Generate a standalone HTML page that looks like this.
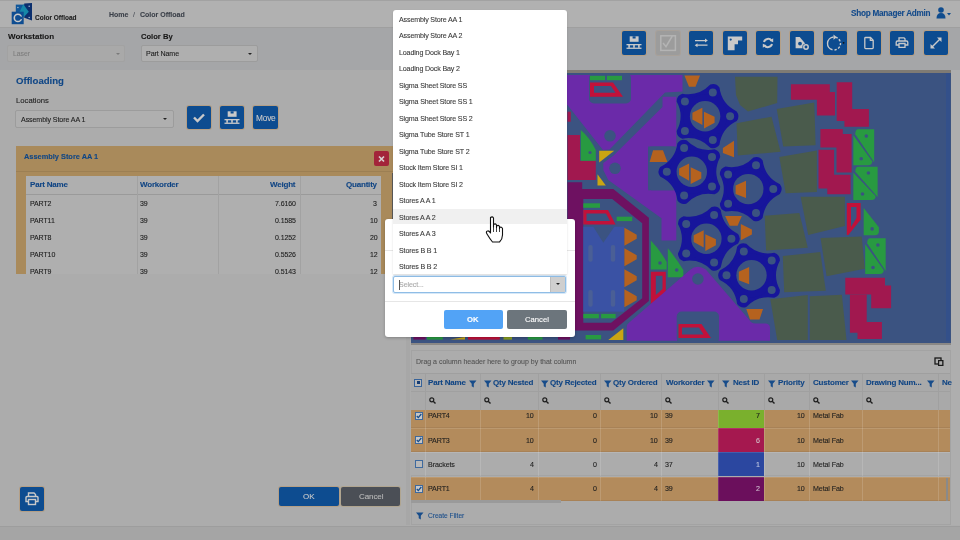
<!DOCTYPE html>
<html><head><meta charset="utf-8">
<style>
*{box-sizing:border-box;margin:0;padding:0}
html,body{width:960px;height:540px;overflow:hidden}
body{position:relative;background:#acacac;font-family:"Liberation Sans",sans-serif;color:#1c1c1c}
.t{-webkit-text-stroke:0.1px currentColor}
.a{position:absolute}
.t{position:absolute;white-space:nowrap;line-height:1;will-change:transform}
.btn{position:absolute;background:#0d4c90;border-radius:2px;box-shadow:0 0 0 1px #b49f86}
.sel{position:absolute;background:#afafaf;border:1px solid #9c9c9c;border-radius:2px}
.caret{position:absolute;width:0;height:0;border-left:2px solid transparent;border-right:2px solid transparent;border-top:2.5px solid #222}
.hdr{color:#114584;font-weight:bold}
</style></head>
<body>
<!-- header -->
<div class="a" style="left:0;top:0;width:960px;height:27px;background:#b1b1b1;border-top:1px solid #a2a2a2"></div>
<div class="a" style="left:0;top:27px;width:960px;height:43px;background:#a5a6a8;border-top:1px solid #9f9f9f"></div>
<div class="a" style="left:0;top:525.5px;width:960px;height:15px;background:#a5a5a5;border-top:1px solid #9d9d9d"></div>

<!-- logo -->
<svg class="a" style="left:0;top:0" width="34" height="27" viewBox="0 0 34 27">
  <rect x="15.8" y="4.6" width="9" height="7.5" fill="#10579a"/>
  <polygon points="24.2,3.4 32,3 32,20.5 24.2,17.8" fill="#0b2f6e"/>
  <polygon points="23.3,4.2 28.8,11.7 23.6,17.3 19.5,12" fill="#1688a8"/>
  <rect x="11.7" y="11.7" width="12" height="12.5" fill="#0f4d91"/>
  <circle cx="17.9" cy="17.9" r="3.6" fill="none" stroke="#c8c8c8" stroke-width="1.6"/>
  <rect x="19.6" y="16.6" width="3" height="2.6" fill="#0f4d91"/>
  <circle cx="17.9" cy="7.5" r="0.8" fill="#9db4cc"/><circle cx="29.2" cy="6.2" r="0.8" fill="#9db4cc"/><circle cx="29.2" cy="17.5" r="0.8" fill="#9db4cc"/>
</svg>
<div class="t" style="left:35px;top:15px;font-size:6.5px;font-weight:bold;color:#1e1e1e">Color Offload</div>
<div class="t" style="left:109px;top:11px;font-size:7px;font-weight:bold;color:#3a3f48">Home</div>
<div class="t" style="left:133px;top:11px;font-size:7px;color:#4a4f58">/</div>
<div class="t" style="left:140px;top:11px;font-size:7px;font-weight:bold;color:#3a3f48">Color Offload</div>
<div class="t" style="left:851px;top:9.8px;font-size:8.2px;letter-spacing:-0.25px;font-weight:bold;color:#134a8a">Shop Manager Admin</div>
<svg class="a" style="left:936px;top:7px" width="17" height="12" viewBox="0 0 17 12">
  <circle cx="5" cy="3" r="2.8" fill="#0f4c8e"/>
  <path d="M0.5 11.5 Q0.5 6 5 6 Q9.5 6 9.5 11.5 Z" fill="#0f4c8e"/>
  <polygon points="11,6 15,6 13,8.5" fill="#0f4c8e"/>
</svg>

<!-- toolbar left -->
<div class="t" style="left:8px;top:33px;font-size:8px;font-weight:bold;color:#161616">Workstation</div>
<div class="sel" style="left:7px;top:45px;width:118px;height:17px;background:#a9a9a9;border-color:#a2a2a2"></div>
<div class="t" style="left:13px;top:51px;font-size:6.8px;color:#7e7e7e">Laser</div>
<div class="caret" style="left:116px;top:53px;border-top-color:#7a7a7a"></div>
<div class="t" style="left:141px;top:33px;font-size:7.6px;font-weight:bold;color:#161616">Color By</div>
<div class="sel" style="left:141px;top:45px;width:117px;height:17px"></div>
<div class="t" style="left:146px;top:51.0px;font-size:7.1px;letter-spacing:-0.1px;color:#1e1e1e">Part Name</div>
<div class="caret" style="left:248px;top:53px"></div>

<!-- offloading -->
<div class="t" style="left:16px;top:76px;font-size:9.6px;font-weight:bold;color:#0f4686">Offloading</div>
<div class="t" style="left:16px;top:97px;font-size:7.7px;color:#1e1e1e">Locations</div>
<div class="sel" style="left:15px;top:110px;width:159px;height:18px"></div>
<div class="t" style="left:21px;top:117.0px;font-size:7.1px;letter-spacing:-0.1px;color:#1e1e1e">Assembly Store AA 1</div>
<div class="caret" style="left:163px;top:118px"></div>
<div class="btn" style="left:187px;top:106px;width:24px;height:23px"></div>
<div class="btn" style="left:220px;top:106px;width:24px;height:23px"></div>
<div class="btn" style="left:253px;top:106px;width:25px;height:23px"></div>
<div class="t" style="left:255.5px;top:113.5px;font-size:8.3px;letter-spacing:-0.2px;color:#c9c9c9">Move</div>

<!-- orange panel -->
<div class="a" style="left:16px;top:146px;width:377px;height:128px;background:#a98a5b"></div>
<div class="a" style="left:16px;top:171px;width:377px;height:1px;background:#9c7f53"></div>
<div class="t" style="left:24px;top:153px;font-size:7.4px;font-weight:bold;color:#0f4686">Assembly Store AA 1</div>
<div class="a" style="left:374px;top:151px;width:15px;height:15px;background:#a3243a;border-radius:2px"></div>
<svg class="a" style="left:374px;top:151px" width="15" height="15" viewBox="0 0 15 15"><path d="M5 5.5 L10 10.5 M10 5.5 L5 10.5" stroke="#d9d0d0" stroke-width="1.7"/></svg>

<div class="a" style="left:26px;top:176px;width:355px;height:98px;background:#afafaf;overflow:hidden">
<div class="a" style="left:0;top:17.5px;width:355px;height:1px;background:#9a9a9a"></div>
<div class="a" style="left:110.7px;top:0;width:1px;height:98px;background:#a2a2a2"></div>
<div class="a" style="left:191.6px;top:0;width:1px;height:98px;background:#a2a2a2"></div>
<div class="a" style="left:274px;top:0;width:1px;height:98px;background:#a2a2a2"></div>
<div class="t hdr" style="left:3.7px;top:4.8px;font-size:8px;letter-spacing:-0.2px">Part Name</div>
<div class="t hdr" style="left:114px;top:4.8px;font-size:8px;letter-spacing:-0.2px">Workorder</div>
<div class="t hdr" style="right:85.5px;top:4.8px;font-size:8px;letter-spacing:-0.2px">Weight</div>
<div class="t hdr" style="right:3.8px;top:4.8px;font-size:8px;letter-spacing:-0.2px">Quantity</div>
<div class="t" style="left:3.7px;top:24.3px;font-size:7px;letter-spacing:-0.1px">PART2</div>
<div class="t" style="left:114px;top:24.3px;font-size:7px;letter-spacing:-0.1px">39</div>
<div class="t" style="right:85.5px;top:24.3px;font-size:7px;letter-spacing:-0.1px">7.6160</div>
<div class="t" style="right:3.8px;top:24.3px;font-size:7px;letter-spacing:-0.1px">3</div>
<div class="t" style="left:3.7px;top:41.3px;font-size:7px;letter-spacing:-0.1px">PART11</div>
<div class="t" style="left:114px;top:41.3px;font-size:7px;letter-spacing:-0.1px">39</div>
<div class="t" style="right:85.5px;top:41.3px;font-size:7px;letter-spacing:-0.1px">0.1585</div>
<div class="t" style="right:3.8px;top:41.3px;font-size:7px;letter-spacing:-0.1px">10</div>
<div class="t" style="left:3.7px;top:58.3px;font-size:7px;letter-spacing:-0.1px">PART8</div>
<div class="t" style="left:114px;top:58.3px;font-size:7px;letter-spacing:-0.1px">39</div>
<div class="t" style="right:85.5px;top:58.3px;font-size:7px;letter-spacing:-0.1px">0.1252</div>
<div class="t" style="right:3.8px;top:58.3px;font-size:7px;letter-spacing:-0.1px">20</div>
<div class="t" style="left:3.7px;top:75.3px;font-size:7px;letter-spacing:-0.1px">PART10</div>
<div class="t" style="left:114px;top:75.3px;font-size:7px;letter-spacing:-0.1px">39</div>
<div class="t" style="right:85.5px;top:75.3px;font-size:7px;letter-spacing:-0.1px">0.5526</div>
<div class="t" style="right:3.8px;top:75.3px;font-size:7px;letter-spacing:-0.1px">12</div>
<div class="t" style="left:3.7px;top:92.3px;font-size:7px;letter-spacing:-0.1px">PART9</div>
<div class="t" style="left:114px;top:92.3px;font-size:7px;letter-spacing:-0.1px">39</div>
<div class="t" style="right:85.5px;top:92.3px;font-size:7px;letter-spacing:-0.1px">0.5143</div>
<div class="t" style="right:3.8px;top:92.3px;font-size:7px;letter-spacing:-0.1px">12</div>
</div>
<div class="a" style="left:392px;top:173px;width:1px;height:101px;background:#5a5a5a"></div>
<div class="btn" style="left:20px;top:487px;width:24px;height:24px"></div>
<div class="btn" style="left:279px;top:487px;width:60px;height:19px"></div>
<div class="t" style="left:303px;top:492.5px;font-size:8px;color:#c9c9c9">OK</div>
<div class="a" style="left:341px;top:487px;width:59px;height:19px;background:#4b4f56;border-radius:2px;box-shadow:0 0 0 1px #b0a590"></div>
<div class="t" style="left:358.5px;top:492.5px;font-size:8px;letter-spacing:-0.1px;color:#b9b9b9">Cancel</div>
<div class="btn" style="left:622px;top:31px;width:24px;height:24px"></div>
<svg class="a" style="left:622px;top:31px" width="24" height="24" viewBox="0 0 24 24"><rect x="7.7" y="5.3" width="8.9" height="5.5" fill="#c9c9c9"/><rect x="10.6" y="5.3" width="3" height="2.2" fill="#0d4c90"/>
<rect x="4.5" y="13" width="15" height="1.3" fill="#c9c9c9"/><rect x="4.5" y="16.6" width="15" height="1.3" fill="#c9c9c9"/>
<rect x="6.3" y="14" width="1.6" height="2.8" fill="#c9c9c9"/><rect x="11.2" y="14" width="1.6" height="2.8" fill="#c9c9c9"/><rect x="16.1" y="14" width="1.6" height="2.8" fill="#c9c9c9"/></svg>
<div class="a" style="left:656px;top:31px;width:24px;height:24px;background:#9c9c9c;border-radius:2px;box-shadow:0 0 0 1px #a8a19a"></div>
<svg class="a" style="left:656px;top:31px" width="24" height="24" viewBox="0 0 24 24"><rect x="4.8" y="4.8" width="14.6" height="14.6" stroke="#b4b4b4" stroke-width="1.5" fill="none"/><path d="M7 12 L10 15.6 L16.3 5" stroke="#b4b4b4" stroke-width="1.5" fill="none"/></svg>
<div class="btn" style="left:689px;top:31px;width:24px;height:24px"></div>
<svg class="a" style="left:689px;top:31px" width="24" height="24" viewBox="0 0 24 24"><path d="M6 9.6 H16.5 M8 14.2 H18.5" stroke="#c9c9c9" stroke-width="1.3" fill="none"/><polygon points="16,7.6 18.8,9.6 16,11.6" fill="#c9c9c9"/><polygon points="8.5,12.2 5.7,14.2 8.5,16.2" fill="#c9c9c9"/></svg>
<div class="btn" style="left:723px;top:31px;width:24px;height:24px"></div>
<svg class="a" style="left:723px;top:31px" width="24" height="24" viewBox="0 0 24 24"><path d="M4.8 5.6 H19.2 V9.6 H15 V13.2 H11.6 V19.2 H4.8 Z" fill="#c9c9c9"/><circle cx="7.7" cy="8.6" r="1.1" fill="#0d4c90"/></svg>
<div class="btn" style="left:756px;top:31px;width:24px;height:24px"></div>
<svg class="a" style="left:756px;top:31px" width="24" height="24" viewBox="0 0 24 24"><path d="M8 11 A4.3 4.3 0 0 1 15.6 9.6" stroke="#c9c9c9" stroke-width="2" fill="none"/><polygon points="13.6,9.8 17.2,7.2 17.2,11.3" fill="#c9c9c9"/><path d="M16 13 A4.3 4.3 0 0 1 8.4 14.4" stroke="#c9c9c9" stroke-width="2" fill="none"/><polygon points="10.4,14.2 6.8,16.8 6.8,12.7" fill="#c9c9c9"/></svg>
<div class="btn" style="left:790px;top:31px;width:24px;height:24px"></div>
<svg class="a" style="left:790px;top:31px" width="24" height="24" viewBox="0 0 24 24"><path d="M5.6 6 H9.7 L15.2 12.5 L13.5 17.3 H5.6 Z" fill="#c9c9c9"/><circle cx="10" cy="12.6" r="1.9" fill="#0d4c90"/><circle cx="16" cy="16" r="3.6" fill="#0d4c90"/><circle cx="16" cy="16" r="2.2" stroke="#c9c9c9" stroke-width="1.5" fill="none"/></svg>
<div class="btn" style="left:823px;top:31px;width:24px;height:24px"></div>
<svg class="a" style="left:823px;top:31px" width="24" height="24" viewBox="0 0 24 24"><path d="M10.5 6 A6.5 6.5 0 0 0 9.5 18.8" stroke="#c9c9c9" stroke-width="1.4" fill="none"/><path d="M11.5 19 A6.5 6.5 0 0 0 12.5 6.2" stroke="#c9c9c9" stroke-width="1.4" fill="none" stroke-dasharray="2.3 1.6"/><polygon points="10.5,3.6 13.8,6.3 10.5,8.8" fill="#c9c9c9"/><circle cx="20.6" cy="11.8" r="0.9" fill="#111"/></svg>
<div class="btn" style="left:857px;top:31px;width:24px;height:24px"></div>
<svg class="a" style="left:857px;top:31px" width="24" height="24" viewBox="0 0 24 24"><path d="M8.6 6.5 H13.5 L16.2 9.2 V16.8 Q16.2 17.6 15.4 17.6 H8.6 Q7.8 17.6 7.8 16.8 V7.3 Q7.8 6.5 8.6 6.5 Z" stroke="#c9c9c9" stroke-width="1.3" fill="none"/><path d="M13.3 6.8 V9.4 H16" stroke="#c9c9c9" stroke-width="1.2" fill="none"/></svg>
<div class="btn" style="left:890px;top:31px;width:24px;height:24px"></div>
<svg class="a" style="left:890px;top:31px" width="24" height="24" viewBox="0 0 24 24"><path d="M9 10 V6.8 H14 L15 7.8 V10" stroke="#c9c9c9" stroke-width="1.3" fill="none"/><path d="M7.5 10 H16.5 Q17.8 10 17.8 11.3 V14 H6.2 V11.3 Q6.2 10 7.5 10 Z" stroke="#c9c9c9" stroke-width="1.3" fill="none"/><path d="M9 12.5 H15 V16.3 H9 Z" stroke="#c9c9c9" stroke-width="1.3" fill="#0d4c90"/></svg>
<div class="btn" style="left:924px;top:31px;width:24px;height:24px"></div>
<svg class="a" style="left:924px;top:31px" width="24" height="24" viewBox="0 0 24 24"><path d="M7.5 16.5 L16.5 7.5" stroke="#c9c9c9" stroke-width="1.4"/><polygon points="13,6.5 17.5,6.5 17.5,11" fill="#c9c9c9"/><polygon points="6.5,13 6.5,17.5 11,17.5" fill="#c9c9c9"/></svg>
<svg class="a" style="left:187px;top:106px" width="24" height="23" viewBox="0 0 24 23"><path d="M7 11.5 L10.5 15 L17 8.5" stroke="#c9c9c9" stroke-width="2.4" fill="none"/></svg>
<svg class="a" style="left:220px;top:106px" width="24" height="23" viewBox="0 0 24 23"><rect x="7.7" y="5.3" width="8.9" height="5.5" fill="#c9c9c9"/><rect x="10.6" y="5.3" width="3" height="2.2" fill="#0d4c90"/>
<rect x="4.5" y="13" width="15" height="1.3" fill="#c9c9c9"/><rect x="4.5" y="16.6" width="15" height="1.3" fill="#c9c9c9"/>
<rect x="6.3" y="14" width="1.6" height="2.8" fill="#c9c9c9"/><rect x="11.2" y="14" width="1.6" height="2.8" fill="#c9c9c9"/><rect x="16.1" y="14" width="1.6" height="2.8" fill="#c9c9c9"/></svg>
<svg class="a" style="left:20px;top:487px" width="24" height="24" viewBox="0 0 24 24"><path d="M8.5 10 V6 H14 L15.5 7.5 V10" stroke="#c9c9c9" stroke-width="1.4" fill="none"/><path d="M6 10.5 Q6 9.5 7 9.5 H17 Q18 9.5 18 10.5 V14.5 H6 Z" fill="none" stroke="#c9c9c9" stroke-width="1.4"/><rect x="8.5" y="12.5" width="7" height="5" stroke="#c9c9c9" stroke-width="1.4" fill="#0d4c90"/></svg>
<div class="a" style="left:411px;top:70px;width:540px;height:3px;background:#7f7b74"></div>
<svg id="nest" class="a" style="left:411px;top:73px" width="540" height="271" viewBox="411 73 540 271"><rect x="411" y="73" width="540" height="271" fill="#3b5381"/><rect x="946" y="73" width="4" height="268" fill="#33508a"/><!--NEST--><polygon points="411.0,75.0 682.5,75.0 682.5,91.5 665.0,92.5 609.5,149.5 603.0,150.0 599.0,145.0 567.5,105.0 411.0,105.0" fill="#6b2aa9" />
<rect x="589.0" y="73.0" width="42.0" height="30.5" rx="5" fill="#3b5381"/>
<rect x="590.0" y="75.8" width="15.0" height="4.4" rx="0" fill="#289a41"/>
<rect x="607.0" y="75.8" width="15.0" height="4.4" rx="0" fill="#289a41"/>
<path d="M590 82.5 H613 L623 96.7 H590 Z M594 86 V92.8 H615.5 L611 86 Z" fill="#c1113a" fill-rule="evenodd"/>
<circle cx="610.0" cy="135.8" r="5.8" fill="#3b5381"/>
<polygon points="662.5,107.0 662.5,96.7 676.3,96.7 676.3,146.5 648.1,146.5 648.1,190.2 676.3,190.2 676.3,240.6 661.5,240.6 661.5,218.3 608.3,180.0 603.3,170.0 603.3,163.0 613.3,155.8" fill="#6b2aa9" />
<rect x="648.1" y="146.5" width="28.2" height="43.7" rx="4" fill="#3b5381"/>
<circle cx="615.0" cy="168.3" r="5.8" fill="#3b5381"/>
<polygon points="653.1,150.2 663.0,150.2 667.4,162.0 649.6,162.0" fill="#b5621f" />
<rect x="567.5" y="111.7" width="3.3" height="10.0" rx="0" fill="#a1184f"/>
<polygon points="567.5,135.0 580.0,135.0 580.0,160.8 595.8,160.8 595.8,180.0 567.5,180.0" fill="#a1184f" />
<path d="M580.8 130 V160.8 H595.8 V150 Q590 138 580.8 130 Z" fill="#289a41" />
<circle cx="590.0" cy="152.5" r="1.6" fill="#3b5381"/>
<polygon points="599.2,150.8 614.2,150.8 599.2,162.5" fill="#c9a512" />
<polygon points="597.5,174.2 597.5,185.5 605.8,185.5" fill="#c9a512" />
<path d="M567.5 182.2 H582.2 V188.9 H613.3 L648.9 217.8 V301 L613.3 330.5 H567.5 Z M583.3 198.9 V322.8 H611.1 L642.2 298.3 V223.3 L612.2 198.9 Z" fill="#6e1161" fill-rule="evenodd"/>
<rect x="583.3" y="203.3" width="16.7" height="4.5" rx="0" fill="#289a41"/>
<rect x="616.7" y="216.7" width="15.5" height="4.4" rx="0" fill="#289a41"/>
<path d="M583.3 210 H608 L615.6 224.4 H583.3 Z M586.5 213.5 V221 H610 L606 213.5 Z" fill="#c1113a" fill-rule="evenodd"/>
<rect x="583.3" y="226.7" width="41.0" height="85.0" rx="0" fill="#3a52a4"/>
<polygon points="593.3,226.7 614.4,226.7 603.3,242.8" fill="#3b5381" />
<rect x="588.3" y="245.0" width="4.4" height="16.7" rx="2" fill="#4a5f96"/>
<rect x="588.3" y="290.0" width="4.4" height="16.7" rx="2" fill="#4a5f96"/>
<rect x="610.8" y="245.0" width="4.4" height="16.7" rx="2" fill="#4a5f96"/>
<rect x="610.8" y="290.0" width="4.4" height="16.7" rx="2" fill="#4a5f96"/>
<polygon points="624.4,227.7 636.7,234.7 636.7,238.7 624.4,245.7" fill="#b5621f" />
<polygon points="624.4,248.2 636.7,255.2 636.7,259.2 624.4,266.2" fill="#b5621f" />
<polygon points="624.4,269.3 636.7,276.3 636.7,280.3 624.4,287.3" fill="#b5621f" />
<polygon points="624.4,289.3 636.7,296.3 636.7,300.3 624.4,307.3" fill="#b5621f" />
<rect x="583.3" y="313.9" width="15.6" height="4.4" rx="0" fill="#289a41"/>
<rect x="601.1" y="313.9" width="14.5" height="4.4" rx="0" fill="#289a41"/>
<rect x="585.6" y="335.0" width="15.5" height="4.4" rx="0" fill="#289a41"/>
<polygon points="608.3,340.0 623.3,328.3 623.3,340.0" fill="#c9a512" />
<path d="M650.8 240.6 V269.4 H666.7 V262 Q660 250 650.8 240.6 Z" fill="#289a41" />
<circle cx="660.0" cy="263.0" r="1.8" fill="#3b5381"/>
<path d="M667.8 248.3 V277.2 H683.3 V270 Q676 258 667.8 248.3 Z" fill="#289a41" />
<circle cx="676.7" cy="270.0" r="1.8" fill="#3b5381"/>
<path d="M650.8 271.7 H665.8 V292.5 L650.8 304.2 Z M655.8 275.8 V295 L662.5 289 V275.8 Z" fill="#c1113a" fill-rule="evenodd"/>
<path d="M626.7 340.8 V327 Q626.7 324 629.2 322.5 L690 270 Q697 264 705.8 269.4 L749.8 320.4 Q751 323 755 323.5 H766 Q770 324 770 328 V340.8 Z" fill="#6b2aa9" />
<circle cx="697.9" cy="279.0" r="5.8" fill="#3b5381"/>
<rect x="676.7" y="311.6" width="42.3" height="32.0" rx="5" fill="#3b5381"/>
<path d="M678.5 324 H701.5 L711 338 H678.5 Z M682 327.5 V334.5 H703.5 L699 327.5 Z" fill="#c1113a" fill-rule="evenodd"/>
<polygon points="684.4,75.6 700.0,75.6 695.5,86.7 689.0,86.7" fill="#b5621f" />
<polygon points="722.9,148.0 734.0,140.7 734.0,157.3 722.9,153.0" fill="#b5621f" />
<polygon points="725.1,216.1 741.8,216.1 737.6,225.8 729.7,225.8" fill="#b5621f" />
<polygon points="740.8,224.0 740.8,240.2 751.9,234.6 751.9,229.5" fill="#b5621f" />
<polygon points="746.3,309.0 763.0,309.0 759.5,319.5 750.0,319.5" fill="#b5621f" />
<path d="M736.73 121.02 Q721.68 128.25 719.46 144.80 A8.2 8.2 0 0 1 710.29 147.78 Q698.77 135.70 682.34 138.69 A8.2 8.2 0 0 1 676.67 130.89 Q684.60 116.20 676.67 101.51 A8.2 8.2 0 0 1 682.34 93.71 Q698.77 96.70 710.29 84.62 A8.2 8.2 0 0 1 719.46 87.60 Q721.68 104.15 736.73 111.38 A8.2 8.2 0 0 1 736.73 121.02 Z" fill="#17159b" />
<circle cx="705.1" cy="116.2" r="22.0" fill="#17159b"/>
<circle cx="705.1" cy="116.2" r="15.2" fill="#3b5381"/>
<circle cx="730.1" cy="116.2" r="4.0" fill="#3b5381"/>
<circle cx="712.8" cy="140.0" r="4.0" fill="#3b5381"/>
<circle cx="684.9" cy="130.9" r="4.0" fill="#3b5381"/>
<circle cx="684.9" cy="101.5" r="4.0" fill="#3b5381"/>
<circle cx="712.8" cy="92.4" r="4.0" fill="#3b5381"/>
<polygon points="702.4,107.8 702.4,125.1 692.4,119.5 692.4,112.8" fill="#b5621f" />
<polygon points="704.0,111.7 704.0,128.4 714.6,122.8 714.6,116.7" fill="#b5621f" />
<path d="M660.17 166.98 Q675.22 159.75 677.44 143.20 A8.2 8.2 0 0 1 686.61 140.22 Q698.13 152.30 714.56 149.31 A8.2 8.2 0 0 1 720.23 157.11 Q712.30 171.80 720.23 186.49 A8.2 8.2 0 0 1 714.56 194.29 Q698.13 191.30 686.61 203.38 A8.2 8.2 0 0 1 677.44 200.40 Q675.22 183.85 660.17 176.62 A8.2 8.2 0 0 1 660.17 166.98 Z" fill="#17159b" />
<circle cx="691.8" cy="171.8" r="22.0" fill="#17159b"/>
<circle cx="691.8" cy="171.8" r="15.2" fill="#3b5381"/>
<circle cx="666.8" cy="171.8" r="4.0" fill="#3b5381"/>
<circle cx="684.1" cy="148.0" r="4.0" fill="#3b5381"/>
<circle cx="712.0" cy="157.1" r="4.0" fill="#3b5381"/>
<circle cx="712.0" cy="186.5" r="4.0" fill="#3b5381"/>
<circle cx="684.1" cy="195.6" r="4.0" fill="#3b5381"/>
<polygon points="689.1,163.4 689.1,180.7 679.1,175.1 679.1,168.4" fill="#b5621f" />
<polygon points="690.7,167.3 690.7,184.0 701.3,178.4 701.3,172.3" fill="#b5621f" />
<path d="M779.93 193.92 Q764.88 201.15 762.66 217.70 A8.2 8.2 0 0 1 753.49 220.68 Q741.97 208.60 725.54 211.59 A8.2 8.2 0 0 1 719.87 203.79 Q727.80 189.10 719.87 174.41 A8.2 8.2 0 0 1 725.54 166.61 Q741.97 169.60 753.49 157.52 A8.2 8.2 0 0 1 762.66 160.50 Q764.88 177.05 779.93 184.28 A8.2 8.2 0 0 1 779.93 193.92 Z" fill="#17159b" />
<circle cx="748.3" cy="189.1" r="22.0" fill="#17159b"/>
<circle cx="748.3" cy="189.1" r="15.2" fill="#3b5381"/>
<circle cx="773.3" cy="189.1" r="4.0" fill="#3b5381"/>
<circle cx="756.0" cy="212.9" r="4.0" fill="#3b5381"/>
<circle cx="728.1" cy="203.8" r="4.0" fill="#3b5381"/>
<circle cx="728.1" cy="174.4" r="4.0" fill="#3b5381"/>
<circle cx="756.0" cy="165.3" r="4.0" fill="#3b5381"/>
<polygon points="746.0,180.8 746.0,198.0 735.6,194.0 735.6,185.5" fill="#b5621f" />
<path d="M738.03 243.52 Q722.98 250.75 720.76 267.30 A8.2 8.2 0 0 1 711.59 270.28 Q700.07 258.20 683.64 261.19 A8.2 8.2 0 0 1 677.97 253.39 Q685.90 238.70 677.97 224.01 A8.2 8.2 0 0 1 683.64 216.21 Q700.07 219.20 711.59 207.12 A8.2 8.2 0 0 1 720.76 210.10 Q722.98 226.65 738.03 233.88 A8.2 8.2 0 0 1 738.03 243.52 Z" fill="#17159b" />
<circle cx="706.4" cy="238.7" r="22.0" fill="#17159b"/>
<circle cx="706.4" cy="238.7" r="15.2" fill="#3b5381"/>
<circle cx="731.4" cy="238.7" r="4.0" fill="#3b5381"/>
<circle cx="714.1" cy="262.5" r="4.0" fill="#3b5381"/>
<circle cx="686.2" cy="253.4" r="4.0" fill="#3b5381"/>
<circle cx="686.2" cy="224.0" r="4.0" fill="#3b5381"/>
<circle cx="714.1" cy="214.9" r="4.0" fill="#3b5381"/>
<polygon points="703.7,230.3 703.7,247.6 693.7,242.0 693.7,235.3" fill="#b5621f" />
<polygon points="705.3,234.2 705.3,250.9 715.9,245.3 715.9,239.2" fill="#b5621f" />
<path d="M719.87 270.48 Q734.92 263.25 737.14 246.70 A8.2 8.2 0 0 1 746.31 243.72 Q757.83 255.80 774.26 252.81 A8.2 8.2 0 0 1 779.93 260.61 Q772.00 275.30 779.93 289.99 A8.2 8.2 0 0 1 774.26 297.79 Q757.83 294.80 746.31 306.88 A8.2 8.2 0 0 1 737.14 303.90 Q734.92 287.35 719.87 280.12 A8.2 8.2 0 0 1 719.87 270.48 Z" fill="#17159b" />
<circle cx="751.5" cy="275.3" r="22.0" fill="#17159b"/>
<circle cx="751.5" cy="275.3" r="15.2" fill="#3b5381"/>
<circle cx="726.5" cy="275.3" r="4.0" fill="#3b5381"/>
<circle cx="743.8" cy="251.5" r="4.0" fill="#3b5381"/>
<circle cx="771.7" cy="260.6" r="4.0" fill="#3b5381"/>
<circle cx="771.7" cy="290.0" r="4.0" fill="#3b5381"/>
<circle cx="743.8" cy="299.1" r="4.0" fill="#3b5381"/>
<polygon points="749.2,267.0 749.2,284.2 738.8,280.2 738.8,271.7" fill="#b5621f" />
<polygon points="735.0,76.7 777.5,76.7 777.2,103.0 748.0,111.5 740.0,105.0 736.0,95.0" fill="#4a5b4c" />
<polygon points="736.5,123.2 771.5,116.7 780.6,151.7 737.8,155.6" fill="#4a5b4c" />
<polygon points="776.7,108.9 814.3,102.4 815.6,145.2 783.2,146.5" fill="#4a5b4c" />
<polygon points="779.3,156.9 816.9,150.4 816.9,191.9 785.7,193.2" fill="#4a5b4c" />
<polygon points="800.6,196.8 844.9,196.8 844.9,225.9 808.2,235.0" fill="#4a5b4c" />
<polygon points="764.7,215.8 799.4,213.0 807.8,247.8 766.1,250.6" fill="#4a5b4c" />
<polygon points="820.5,238.1 861.7,236.6 864.8,268.7 826.6,276.3" fill="#4a5b4c" />
<polygon points="782.8,256.1 820.3,252.0 825.8,290.8 784.2,292.2" fill="#4a5b4c" />
<polygon points="770.3,299.2 807.8,295.0 807.8,340.0 777.2,340.0" fill="#4a5b4c" />
<polygon points="809.8,296.2 841.9,294.7 846.5,340.0 809.8,340.0" fill="#4a5b4c" />
<polygon points="790.9,84.3 829.8,84.3 829.8,92.0 835.0,92.0 835.0,115.4 816.9,115.4 816.9,99.8 790.9,99.8" fill="#a1184f" />
<polygon points="836.7,82.2 852.2,82.2 852.2,108.9 868.9,108.9 868.9,126.7 844.4,126.7 844.4,121.1 836.7,121.1" fill="#a1184f" />
<polygon points="820.4,129.0 842.8,129.0 842.8,133.9 851.6,133.9 851.6,172.5 836.5,172.5 836.5,147.5 820.4,147.5" fill="#a1184f" />
<polygon points="818.5,149.8 834.1,149.8 834.1,174.8 850.6,174.8 850.6,194.2 827.3,194.2 827.3,188.4 818.5,188.4" fill="#a1184f" />
<polygon points="845.3,277.8 885.0,277.8 885.0,285.4 891.1,285.4 891.1,308.3 871.2,308.3 871.2,294.6 845.3,294.6" fill="#a1184f" />
<polygon points="849.9,294.6 866.7,294.6 866.7,322.1 881.9,322.1 881.9,338.9 857.5,338.9 857.5,332.8 849.9,332.8" fill="#a1184f" />
<path d="M846.8 202.9 H860.6 V219.7 L848.3 235 H846.8 Z M851 207 V227 L856.5 218 V207 Z" fill="#c1113a" fill-rule="evenodd"/>
<path d="M858.3 129.2 H874.2 V162.3 L855.3 134.2 Q855.3 129.2 858.3 129.2 Z" fill="#289a41" />
<path d="M853.3 135.2 L872.2 161.3 Q872.2 165.3 868.2 165.3 H853.3 Z" fill="#289a41" />
<circle cx="866.3" cy="136.1" r="1.8" fill="#3b5381"/>
<circle cx="861.2" cy="158.8" r="1.8" fill="#3b5381"/>
<path d="M858.3 166.7 H877.6 V197.0 L855.3 171.7 Q855.3 166.7 858.3 166.7 Z" fill="#289a41" />
<path d="M853.3 172.7 L875.6 196.0 Q875.6 200.0 871.6 200.0 H853.3 Z" fill="#289a41" />
<circle cx="868.4" cy="173.0" r="1.8" fill="#3b5381"/>
<circle cx="862.5" cy="194.0" r="1.8" fill="#3b5381"/>
<path d="M863.7 207.9 L878.9 227.2 V231.2 Q878.9 235.2 874.9 235.2 H863.7 Z" fill="#289a41" />
<circle cx="872.1" cy="228.9" r="1.8" fill="#3b5381"/>
<path d="M870.2 238.2 H885.7 V270.9 L867.2 243.2 Q867.2 238.2 870.2 238.2 Z" fill="#289a41" />
<path d="M865.2 244.2 L883.7 269.9 Q883.7 273.9 879.7 273.9 H865.2 Z" fill="#289a41" />
<circle cx="877.9" cy="245.0" r="1.8" fill="#3b5381"/>
<circle cx="873.0" cy="267.5" r="1.8" fill="#3b5381"/>
<rect x="413.4" y="337.0" width="12.2" height="2.6" rx="0" fill="#6e1161"/>
<rect x="427.0" y="337.0" width="15.8" height="2.6" rx="0" fill="#289a41"/>
<polygon points="450.0,339.6 465.0,337.0 465.0,339.6" fill="#c9a512" />
<rect x="468.0" y="337.0" width="31.8" height="2.6" rx="0" fill="#c1113a"/>
<rect x="503.5" y="337.0" width="8.5" height="2.6" rx="0" fill="#8aa020"/>
<rect x="527.8" y="337.0" width="14.7" height="2.6" rx="0" fill="#289a41"/>
<rect x="558.0" y="337.0" width="12.0" height="2.6" rx="0" fill="#6e1161"/>
<!--NESTEND--></svg>
<div class="a" style="left:411px;top:343px;width:540px;height:1.5px;background:#8a8886"></div>
<div class="a" style="left:406px;top:70px;width:4px;height:455px;background:#a7a7a7"></div>
<div class="a" style="left:951px;top:70px;width:9px;height:455px;background:#aeaeae"></div>
<div class="a" style="left:411px;top:350px;width:540px;height:175px;background:#acacac;border:1px solid #a3a3a3"></div>
<div class="t" style="left:416px;top:358px;font-size:7px;color:#555">Drag a column header here to group by that column</div>
<svg class="a" style="left:934px;top:357px" width="11" height="10" viewBox="0 0 11 10"><rect x="1" y="1" width="6" height="6" fill="none" stroke="#1a1a1a" stroke-width="1.3"/><rect x="4" y="3" width="5.5" height="6" fill="#1a1a1a"/><rect x="5.2" y="4.2" width="3" height="3.6" fill="#acacac"/></svg>
<div class="a" style="left:411px;top:373.5px;width:539px;height:36px;background:#a9a9a9"></div>
<div class="a" style="left:411px;top:373px;width:539px;height:1px;background:#9f9f9f"></div>
<div class="a" style="left:411px;top:391px;width:539px;height:1px;background:#a0a0a0"></div>
<div class="a" style="left:425px;top:373.5px;width:1px;height:127px;background:#a0a0a0"></div>
<div class="a" style="left:479.5px;top:373.5px;width:1px;height:127px;background:#a0a0a0"></div>
<div class="a" style="left:537.5px;top:373.5px;width:1px;height:127px;background:#a0a0a0"></div>
<div class="a" style="left:600px;top:373.5px;width:1px;height:127px;background:#a0a0a0"></div>
<div class="a" style="left:661.25px;top:373.5px;width:1px;height:127px;background:#a0a0a0"></div>
<div class="a" style="left:717.5px;top:373.5px;width:1px;height:127px;background:#a0a0a0"></div>
<div class="a" style="left:763.75px;top:373.5px;width:1px;height:127px;background:#a0a0a0"></div>
<div class="a" style="left:808.5px;top:373.5px;width:1px;height:127px;background:#a0a0a0"></div>
<div class="a" style="left:861.5px;top:373.5px;width:1px;height:127px;background:#a0a0a0"></div>
<div class="a" style="left:937.5px;top:373.5px;width:1px;height:127px;background:#a0a0a0"></div>
<div class="a" style="left:414px;top:378.5px;width:8px;height:8px;border:1px solid #37639a;background:#b8b8b8"></div><div class="a" style="left:416.5px;top:381px;width:3px;height:3px;background:#153d75"></div>
<div class="t hdr" style="left:428.25px;top:379px;font-size:8px;letter-spacing:-0.2px">Part Name</div>
<svg class="a" style="left:468.75px;top:379.5px" width="8" height="8" viewBox="0 0 8 8"><path d="M0 0.5 H7.5 L4.8 3.8 V7.5 L2.7 6.2 V3.8 Z" fill="#174c8a"/></svg>
<div class="t hdr" style="left:492.5px;top:379px;font-size:8px;letter-spacing:-0.2px">Qty Nested</div>
<svg class="a" style="left:483.75px;top:379.5px" width="8" height="8" viewBox="0 0 8 8"><path d="M0 0.5 H7.5 L4.8 3.8 V7.5 L2.7 6.2 V3.8 Z" fill="#174c8a"/></svg>
<div class="t hdr" style="left:550px;top:379px;font-size:8px;letter-spacing:-0.2px">Qty Rejected</div>
<svg class="a" style="left:541.25px;top:379.5px" width="8" height="8" viewBox="0 0 8 8"><path d="M0 0.5 H7.5 L4.8 3.8 V7.5 L2.7 6.2 V3.8 Z" fill="#174c8a"/></svg>
<div class="t hdr" style="left:612.5px;top:379px;font-size:8px;letter-spacing:-0.2px">Qty Ordered</div>
<svg class="a" style="left:603.75px;top:379.5px" width="8" height="8" viewBox="0 0 8 8"><path d="M0 0.5 H7.5 L4.8 3.8 V7.5 L2.7 6.2 V3.8 Z" fill="#174c8a"/></svg>
<div class="t hdr" style="left:665.5px;top:379px;font-size:8px;letter-spacing:-0.2px">Workorder</div>
<svg class="a" style="left:707px;top:379.5px" width="8" height="8" viewBox="0 0 8 8"><path d="M0 0.5 H7.5 L4.8 3.8 V7.5 L2.7 6.2 V3.8 Z" fill="#174c8a"/></svg>
<div class="t hdr" style="left:733px;top:379px;font-size:8px;letter-spacing:-0.2px">Nest ID</div>
<svg class="a" style="left:721.75px;top:379.5px" width="8" height="8" viewBox="0 0 8 8"><path d="M0 0.5 H7.5 L4.8 3.8 V7.5 L2.7 6.2 V3.8 Z" fill="#174c8a"/></svg>
<div class="t hdr" style="left:778.25px;top:379px;font-size:8px;letter-spacing:-0.2px">Priority</div>
<svg class="a" style="left:767.5px;top:379.5px" width="8" height="8" viewBox="0 0 8 8"><path d="M0 0.5 H7.5 L4.8 3.8 V7.5 L2.7 6.2 V3.8 Z" fill="#174c8a"/></svg>
<div class="t hdr" style="left:812.5px;top:379px;font-size:8px;letter-spacing:-0.2px">Customer</div>
<svg class="a" style="left:850.6px;top:379.5px" width="8" height="8" viewBox="0 0 8 8"><path d="M0 0.5 H7.5 L4.8 3.8 V7.5 L2.7 6.2 V3.8 Z" fill="#174c8a"/></svg>
<div class="t hdr" style="left:865.6px;top:379px;font-size:8px;letter-spacing:-0.2px">Drawing Num...</div>
<svg class="a" style="left:926.7px;top:379.5px" width="8" height="8" viewBox="0 0 8 8"><path d="M0 0.5 H7.5 L4.8 3.8 V7.5 L2.7 6.2 V3.8 Z" fill="#174c8a"/></svg>
<div class="t hdr" style="left:941.7px;top:379px;font-size:8px;letter-spacing:-0.2px">Ne</div>
<svg class="a" style="left:429px;top:397px" width="7" height="7" viewBox="0 0 7 7"><circle cx="2.8" cy="2.8" r="2" fill="none" stroke="#1e1e1e" stroke-width="1.2"/><path d="M4.2 4.2 L6.5 6.5" stroke="#1e1e1e" stroke-width="1.4"/></svg>
<svg class="a" style="left:483.5px;top:397px" width="7" height="7" viewBox="0 0 7 7"><circle cx="2.8" cy="2.8" r="2" fill="none" stroke="#1e1e1e" stroke-width="1.2"/><path d="M4.2 4.2 L6.5 6.5" stroke="#1e1e1e" stroke-width="1.4"/></svg>
<svg class="a" style="left:541.5px;top:397px" width="7" height="7" viewBox="0 0 7 7"><circle cx="2.8" cy="2.8" r="2" fill="none" stroke="#1e1e1e" stroke-width="1.2"/><path d="M4.2 4.2 L6.5 6.5" stroke="#1e1e1e" stroke-width="1.4"/></svg>
<svg class="a" style="left:604px;top:397px" width="7" height="7" viewBox="0 0 7 7"><circle cx="2.8" cy="2.8" r="2" fill="none" stroke="#1e1e1e" stroke-width="1.2"/><path d="M4.2 4.2 L6.5 6.5" stroke="#1e1e1e" stroke-width="1.4"/></svg>
<svg class="a" style="left:665.25px;top:397px" width="7" height="7" viewBox="0 0 7 7"><circle cx="2.8" cy="2.8" r="2" fill="none" stroke="#1e1e1e" stroke-width="1.2"/><path d="M4.2 4.2 L6.5 6.5" stroke="#1e1e1e" stroke-width="1.4"/></svg>
<svg class="a" style="left:721.5px;top:397px" width="7" height="7" viewBox="0 0 7 7"><circle cx="2.8" cy="2.8" r="2" fill="none" stroke="#1e1e1e" stroke-width="1.2"/><path d="M4.2 4.2 L6.5 6.5" stroke="#1e1e1e" stroke-width="1.4"/></svg>
<svg class="a" style="left:767.75px;top:397px" width="7" height="7" viewBox="0 0 7 7"><circle cx="2.8" cy="2.8" r="2" fill="none" stroke="#1e1e1e" stroke-width="1.2"/><path d="M4.2 4.2 L6.5 6.5" stroke="#1e1e1e" stroke-width="1.4"/></svg>
<svg class="a" style="left:812.5px;top:397px" width="7" height="7" viewBox="0 0 7 7"><circle cx="2.8" cy="2.8" r="2" fill="none" stroke="#1e1e1e" stroke-width="1.2"/><path d="M4.2 4.2 L6.5 6.5" stroke="#1e1e1e" stroke-width="1.4"/></svg>
<svg class="a" style="left:865.5px;top:397px" width="7" height="7" viewBox="0 0 7 7"><circle cx="2.8" cy="2.8" r="2" fill="none" stroke="#1e1e1e" stroke-width="1.2"/><path d="M4.2 4.2 L6.5 6.5" stroke="#1e1e1e" stroke-width="1.4"/></svg>
<div class="a" style="left:411px;top:409.5px;width:539px;height:91.5px;overflow:hidden">
<div class="a" style="left:0;top:-6.2px;width:539px;height:24.4px;background:#b38b5c;border-bottom:1px solid #a88257"></div>
<div class="a" style="left:306.5px;top:-6.2px;width:46px;height:24.4px;background:#7ab02d"></div>
<div class="a" style="left:3.5px;top:2.0px;width:8px;height:8px;border:1px solid #3f6a9e;background:#c7c7c7"></div>
<svg class="a" style="left:3.5px;top:2.0px" width="8" height="8" viewBox="0 0 8 8"><path d="M1.8 4 L3.3 5.6 L6.3 2" stroke="#174c8a" stroke-width="1.3" fill="none"/></svg>
<div class="t" style="left:17.25px;top:3.6px;font-size:7.1px;letter-spacing:-0.1px;color:#1e1e1e">PART4</div>
<div class="t" style="right:416.0px;top:3.6px;font-size:7.1px;letter-spacing:-0.1px;color:#1e1e1e">10</div>
<div class="t" style="right:353.5px;top:3.6px;font-size:7.1px;letter-spacing:-0.1px;color:#1e1e1e">0</div>
<div class="t" style="right:292.2px;top:3.6px;font-size:7.1px;letter-spacing:-0.1px;color:#1e1e1e">10</div>
<div class="t" style="right:145.0px;top:3.6px;font-size:7.1px;letter-spacing:-0.1px;color:#1e1e1e">10</div>
<div class="t" style="left:254px;top:3.6px;font-size:7.1px;letter-spacing:-0.1px;color:#1e1e1e">39</div>
<div class="t" style="right:189.8px;top:3.6px;font-size:7.1px;letter-spacing:-0.1px;color:#1a1a1a">7</div>
<div class="t" style="left:401.7px;top:3.6px;font-size:7.1px;letter-spacing:-0.1px;color:#1e1e1e">Metal Fab</div>
<div class="a" style="left:0;top:18.2px;width:539px;height:24.4px;background:#b38b5c;border-bottom:1px solid #a88257"></div>
<div class="a" style="left:306.5px;top:18.2px;width:46px;height:24.4px;background:#a5184f"></div>
<div class="a" style="left:3.5px;top:26.4px;width:8px;height:8px;border:1px solid #3f6a9e;background:#c7c7c7"></div>
<svg class="a" style="left:3.5px;top:26.4px" width="8" height="8" viewBox="0 0 8 8"><path d="M1.8 4 L3.3 5.6 L6.3 2" stroke="#174c8a" stroke-width="1.3" fill="none"/></svg>
<div class="t" style="left:17.25px;top:28.0px;font-size:7.1px;letter-spacing:-0.1px;color:#1e1e1e">PART3</div>
<div class="t" style="right:416.0px;top:28.0px;font-size:7.1px;letter-spacing:-0.1px;color:#1e1e1e">10</div>
<div class="t" style="right:353.5px;top:28.0px;font-size:7.1px;letter-spacing:-0.1px;color:#1e1e1e">0</div>
<div class="t" style="right:292.2px;top:28.0px;font-size:7.1px;letter-spacing:-0.1px;color:#1e1e1e">10</div>
<div class="t" style="right:145.0px;top:28.0px;font-size:7.1px;letter-spacing:-0.1px;color:#1e1e1e">10</div>
<div class="t" style="left:254px;top:28.0px;font-size:7.1px;letter-spacing:-0.1px;color:#1e1e1e">39</div>
<div class="t" style="right:189.8px;top:28.0px;font-size:7.1px;letter-spacing:-0.1px;color:#d0c0c8">6</div>
<div class="t" style="left:401.7px;top:28.0px;font-size:7.1px;letter-spacing:-0.1px;color:#1e1e1e">Metal Fab</div>
<div class="a" style="left:0;top:42.6px;width:539px;height:24.4px;background:#acacac;border-bottom:1px solid #a4a4a4"></div>
<div class="a" style="left:306.5px;top:42.6px;width:46px;height:24.4px;background:#2b47a0"></div>
<div class="a" style="left:3.5px;top:50.8px;width:8px;height:8px;border:1px solid #3f6a9e;background:#b9b9b9"></div>
<div class="t" style="left:17.25px;top:52.4px;font-size:7.1px;letter-spacing:-0.1px;color:#1e1e1e">Brackets</div>
<div class="t" style="right:416.0px;top:52.4px;font-size:7.1px;letter-spacing:-0.1px;color:#1e1e1e">4</div>
<div class="t" style="right:353.5px;top:52.4px;font-size:7.1px;letter-spacing:-0.1px;color:#1e1e1e">0</div>
<div class="t" style="right:292.2px;top:52.4px;font-size:7.1px;letter-spacing:-0.1px;color:#1e1e1e">4</div>
<div class="t" style="right:145.0px;top:52.4px;font-size:7.1px;letter-spacing:-0.1px;color:#1e1e1e">10</div>
<div class="t" style="left:254px;top:52.4px;font-size:7.1px;letter-spacing:-0.1px;color:#1e1e1e">37</div>
<div class="t" style="right:189.8px;top:52.4px;font-size:7.1px;letter-spacing:-0.1px;color:#c0c8e0">1</div>
<div class="t" style="left:401.7px;top:52.4px;font-size:7.1px;letter-spacing:-0.1px;color:#1e1e1e">Metal Fab</div>
<div class="a" style="left:0;top:67.0px;width:539px;height:24.4px;background:#b38b5c;border-bottom:1px solid #a88257"></div>
<div class="a" style="left:306.5px;top:67.0px;width:46px;height:24.4px;background:#6b0f5c"></div>
<div class="a" style="left:3.5px;top:75.2px;width:8px;height:8px;border:1px solid #3f6a9e;background:#c7c7c7"></div>
<svg class="a" style="left:3.5px;top:75.2px" width="8" height="8" viewBox="0 0 8 8"><path d="M1.8 4 L3.3 5.6 L6.3 2" stroke="#174c8a" stroke-width="1.3" fill="none"/></svg>
<div class="t" style="left:17.25px;top:76.8px;font-size:7.1px;letter-spacing:-0.1px;color:#1e1e1e">PART1</div>
<div class="t" style="right:416.0px;top:76.8px;font-size:7.1px;letter-spacing:-0.1px;color:#1e1e1e">4</div>
<div class="t" style="right:353.5px;top:76.8px;font-size:7.1px;letter-spacing:-0.1px;color:#1e1e1e">0</div>
<div class="t" style="right:292.2px;top:76.8px;font-size:7.1px;letter-spacing:-0.1px;color:#1e1e1e">4</div>
<div class="t" style="right:145.0px;top:76.8px;font-size:7.1px;letter-spacing:-0.1px;color:#1e1e1e">10</div>
<div class="t" style="left:254px;top:76.8px;font-size:7.1px;letter-spacing:-0.1px;color:#1e1e1e">39</div>
<div class="t" style="right:189.8px;top:76.8px;font-size:7.1px;letter-spacing:-0.1px;color:#d0c0d0">2</div>
<div class="t" style="left:401.7px;top:76.8px;font-size:7.1px;letter-spacing:-0.1px;color:#1e1e1e">Metal Fab</div>
</div>
<div class="a" style="left:425px;top:409.5px;width:1px;height:91px;background:rgba(255,255,255,0.14)"></div><div class="a" style="left:479.5px;top:409.5px;width:1px;height:91px;background:rgba(255,255,255,0.14)"></div><div class="a" style="left:537.5px;top:409.5px;width:1px;height:91px;background:rgba(255,255,255,0.14)"></div><div class="a" style="left:600px;top:409.5px;width:1px;height:91px;background:rgba(255,255,255,0.14)"></div><div class="a" style="left:661.25px;top:409.5px;width:1px;height:91px;background:rgba(255,255,255,0.14)"></div><div class="a" style="left:717.5px;top:409.5px;width:1px;height:91px;background:rgba(255,255,255,0.14)"></div><div class="a" style="left:763.75px;top:409.5px;width:1px;height:91px;background:rgba(255,255,255,0.14)"></div><div class="a" style="left:808.5px;top:409.5px;width:1px;height:91px;background:rgba(255,255,255,0.14)"></div><div class="a" style="left:861.5px;top:409.5px;width:1px;height:91px;background:rgba(255,255,255,0.14)"></div><div class="a" style="left:937.5px;top:409.5px;width:1px;height:91px;background:rgba(255,255,255,0.14)"></div><div class="a" style="left:411px;top:427.7px;width:539px;height:1px;background:rgba(255,255,255,0.12)"></div><div class="a" style="left:411px;top:452.1px;width:539px;height:1px;background:rgba(255,255,255,0.12)"></div><div class="a" style="left:411px;top:476.5px;width:539px;height:1px;background:rgba(255,255,255,0.12)"></div><div class="a" style="left:411px;top:500px;width:150px;height:3px;background:#9a9a9a"></div>
<div class="a" style="left:946px;top:478px;width:2px;height:23px;background:#8a8a8a"></div>
<svg class="a" style="left:416px;top:512px" width="8" height="8" viewBox="0 0 8 8"><path d="M0 0.5 H7.5 L4.8 3.8 V7.5 L2.7 6.2 V3.8 Z" fill="#174c8a"/></svg>
<div class="t" style="left:427.5px;top:512.5px;font-size:6.6px;color:#1d4f8b">Create Filter</div>
<div class="a" style="left:385px;top:219px;width:190px;height:118px;background:#fff;border-radius:3px;box-shadow:0 1px 3px rgba(0,0,0,.25)"></div>
<div class="a" style="left:385px;top:249.5px;width:190px;height:1px;background:#e6e6e6"></div>
<div class="a" style="left:385px;top:300.5px;width:190px;height:1px;background:#e6e6e6"></div>
<div class="a" style="left:393px;top:275.5px;width:173px;height:17.5px;border:1px solid #8fbde6;border-radius:2px;background:#fff;box-shadow:0 0 0 1px #d6e8f8"></div>
<div class="t" style="left:399px;top:282.0px;font-size:7.1px;letter-spacing:-0.1px;color:#a8a8a8">Select...</div>
<div class="a" style="left:398.5px;top:279.5px;width:1px;height:10px;background:#555"></div>
<div class="a" style="left:549.5px;top:276.5px;width:15.5px;height:15.5px;background:#cfcfcf;border-left:1px solid #bdbdbd"></div>
<div class="caret" style="left:555.5px;top:283px"></div>
<div class="a" style="left:444px;top:310px;width:59px;height:18.5px;background:#52a3f6;border-radius:2px"></div>
<div class="t" style="left:467px;top:315.5px;font-size:7.7px;font-weight:bold;color:#fff">OK</div>
<div class="a" style="left:507px;top:310px;width:60px;height:18.5px;background:#6c757c;border-radius:2px"></div>
<div class="t" style="left:525px;top:315.5px;font-size:7.7px;color:#fff">Cancel</div>
<div class="a" style="left:393px;top:10px;width:174px;height:264px;background:#fff;border-radius:3px 3px 0 0;box-shadow:0 1px 2px rgba(0,0,0,.15)"></div>
<div class="a" style="left:393px;top:208.5px;width:174px;height:15.5px;background:#f0f0f0"></div>
<div class="t" style="left:399px;top:16.8px;font-size:7.1px;letter-spacing:-0.15px;color:#3a3a3a">Assembly Store AA 1</div>
<div class="t" style="left:399px;top:33.3px;font-size:7.1px;letter-spacing:-0.15px;color:#3a3a3a">Assembly Store AA 2</div>
<div class="t" style="left:399px;top:49.8px;font-size:7.1px;letter-spacing:-0.15px;color:#3a3a3a">Loading Dock Bay 1</div>
<div class="t" style="left:399px;top:66.3px;font-size:7.1px;letter-spacing:-0.15px;color:#3a3a3a">Loading Dock Bay 2</div>
<div class="t" style="left:399px;top:82.8px;font-size:7.1px;letter-spacing:-0.15px;color:#3a3a3a">Sigma Sheet Store SS</div>
<div class="t" style="left:399px;top:99.3px;font-size:7.1px;letter-spacing:-0.15px;color:#3a3a3a">Sigma Sheet Store SS 1</div>
<div class="t" style="left:399px;top:115.8px;font-size:7.1px;letter-spacing:-0.15px;color:#3a3a3a">Sigma Sheet Store SS 2</div>
<div class="t" style="left:399px;top:132.3px;font-size:7.1px;letter-spacing:-0.15px;color:#3a3a3a">Sigma Tube Store ST 1</div>
<div class="t" style="left:399px;top:148.8px;font-size:7.1px;letter-spacing:-0.15px;color:#3a3a3a">Sigma Tube Store ST 2</div>
<div class="t" style="left:399px;top:165.3px;font-size:7.1px;letter-spacing:-0.15px;color:#3a3a3a">Stock Item Store SI 1</div>
<div class="t" style="left:399px;top:181.8px;font-size:7.1px;letter-spacing:-0.15px;color:#3a3a3a">Stock Item Store SI 2</div>
<div class="t" style="left:399px;top:198.3px;font-size:7.1px;letter-spacing:-0.15px;color:#3a3a3a">Stores A A 1</div>
<div class="t" style="left:399px;top:214.8px;font-size:7.1px;letter-spacing:-0.15px;color:#3a3a3a">Stores A A 2</div>
<div class="t" style="left:399px;top:231.3px;font-size:7.1px;letter-spacing:-0.15px;color:#3a3a3a">Stores A A 3</div>
<div class="t" style="left:399px;top:247.8px;font-size:7.1px;letter-spacing:-0.15px;color:#3a3a3a">Stores B B 1</div>
<div class="t" style="left:399px;top:264.3px;font-size:7.1px;letter-spacing:-0.15px;color:#3a3a3a">Stores B B 2</div>
<svg class="a" style="left:483px;top:214.5px" width="24" height="30" viewBox="0 0 24 30">
<path d="M7.5 2.5 Q9.5 1 10.5 3 V12 V9.5 Q12.5 8 13.5 10 V12.5 V11 Q15.5 9.5 16.5 11.5 V13.5 V12.5 Q18.5 11.5 19.5 13.5 V20 Q19.5 24 16.5 27 H9.5 Q7 24 4 19 Q2.5 16.5 4.5 16 Q6 15.5 7.5 18 V3.5 Z" fill="#fff" stroke="#111" stroke-width="1.1" stroke-linejoin="round"/>
<path d="M10.5 12 V17 M13.5 12.5 V17 M16.5 13.5 V17" stroke="#111" stroke-width="0.8"/>
</svg>
<div id="x"></div>
</body></html>
